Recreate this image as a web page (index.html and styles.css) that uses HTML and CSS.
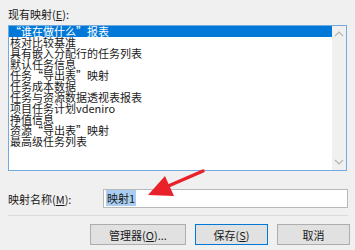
FILE: index.html
```html
<!DOCTYPE html>
<html lang="zh-CN">
<head>
  <meta charset="UTF-8" />
  <title>映射</title>
  <link rel="stylesheet" href="styles.css">
</head>
<body>
  <div class="caption">现有映射(<u>E</u>):</div>
  <div class="listbox">
    <ul class="items">
      <li class="selected"><span class="q">“</span>谁在做什么<span class="q">”</span>报表</li>
      <li>核对比较基准</li>
      <li>具有嵌入分配行的任务列表</li>
      <li>默认任务信息</li>
      <li>任务<span class="q">“</span>导出表<span class="q">”</span>映射</li>
      <li>任务成本数据</li>
      <li>任务与资源数据透视表报表</li>
      <li>项目任务计划vdeniro</li>
      <li>挣值信息</li>
      <li>资源<span class="q">“</span>导出表<span class="q">”</span>映射</li>
      <li>最高级任务列表</li>
    </ul>
    <div class="scrollbar">
      <svg width="14" height="10" viewBox="0 0 14 10"><path d="M3 7 L7 3 L11 7" fill="none" stroke="#b4b4b4" stroke-width="1.2"/></svg>
      <svg width="14" height="10" viewBox="0 0 14 10"><path d="M3 3 L7 7 L11 3" fill="none" stroke="#b4b4b4" stroke-width="1.2"/></svg>
    </div>
  </div>

  <div class="name-row">
    <label class="name-label">映射名称(<u>M</u>):</label>
    <div class="textbox"><span class="sel">映射1</span></div>
  </div>

  <div class="separator"></div>

  <div class="buttons">
    <button class="btn wide">管理器(<u>O</u>)...</button>
    <button class="btn default">保存(<u>S</u>)</button>
    <button class="btn">取消</button>
  </div>

  <svg class="arrow" width="355" height="250" viewBox="0 0 355 250">
    <line x1="203" y1="171" x2="166" y2="187" stroke="#e8212b" stroke-width="3.5" stroke-linecap="round"/>
    <polygon points="148,195 165,176 169,185 174,196" fill="#e8212b"/>
  </svg>
</body>
</html>
```

FILE: styles.css
```css
body {
  margin: 0;
  padding: 6px 7px 0 8px;
  background-color: #f0f0f0;
  font-family: "Noto Sans CJK SC", "DejaVu Sans", sans-serif;
  font-size: 11px;
  color: #1a1a1a;
  position: relative;
}
u {
  text-decoration-thickness: 1px;
  text-underline-offset: 1px;
}
.caption {
  height: 19px;
  line-height: 16px;
}
.listbox {
  box-sizing: border-box;
  width: 339px;
  height: 146px;
  border: 1px solid #72aae0;
  background-color: white;
  display: flex;
}
.items {
  flex: 1;
  margin: 0;
  padding: 0;
  list-style: none;
}
.items li {
  height: 11px;
  line-height: 11px;
  padding-left: 1px;
  white-space: nowrap;
}
.items li.selected {
  background-color: #0078d7;
  color: white;
}
.q {
  font-feature-settings: "fwid";
}
.scrollbar {
  width: 14px;
  background-color: #f0f0f0;
  display: flex;
  flex-direction: column;
  justify-content: space-between;
  padding: 3px 0;
}
.name-row {
  display: flex;
  align-items: center;
  margin-top: 18px;
  height: 19px;
}
.name-label {
  width: 95px;
}
.textbox {
  box-sizing: border-box;
  width: 245px;
  height: 19px;
  border: 1px solid #b9b9b9;
  background-color: white;
  padding: 2px 2px 0 2px;
  line-height: 13px;
}
.sel {
  background-color: #a8cdf0;
  padding: 0 1px;
}
.separator {
  margin-top: 7px;
  height: 1px;
  background-color: #dadada;
}
.buttons {
  display: flex;
  gap: 9px;
  margin-top: 8px;
  margin-left: 82px;
  margin-right: -2px;
}
.btn {
  box-sizing: border-box;
  width: 73px;
  height: 21px;
  border: 1px solid #adadad;
  background-color: #e1e1e1;
  font-family: inherit;
  font-size: 11px;
  color: #1a1a1a;
  padding: 0;
}
.btn.wide {
  width: 96px;
}
.btn.default {
  border-color: #0078d7;
}
.arrow {
  position: absolute;
  top: 0;
  left: 0;
  pointer-events: none;
}
```
